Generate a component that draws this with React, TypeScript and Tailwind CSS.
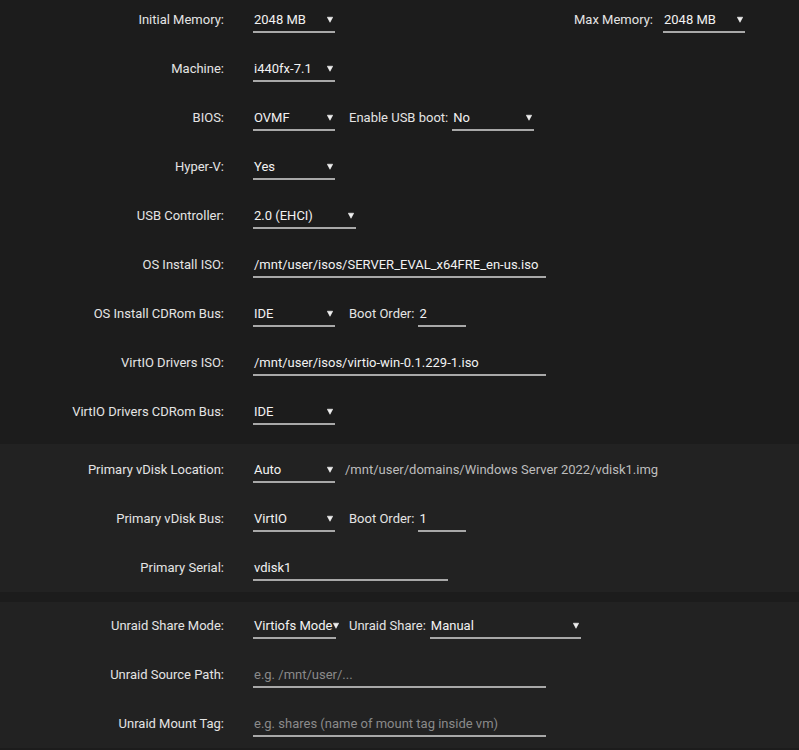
import React from 'react';

function Arrow() {
  return (
    <svg width="6" height="7" viewBox="0 0 6 7" className="shrink-0">
      <path d="M0.3 1.2 L5.7 1.2 L3 6.3 Z" fill="#f0f0f0" stroke="#f0f0f0" strokeWidth="0.6" strokeLinejoin="round" />
    </svg>
  );
}

function Select({ value, w, tight }: { value: string; w: string; tight?: boolean }) {
  return (
    <div className={`flex items-center h-[28px] pt-[3px] border-b-2 border-[#a8a8a8] pl-px pr-[2px] text-[#f2f2f2] ${w} ${tight ? 'justify-start gap-px' : 'justify-between'}`}>
      <span className="whitespace-nowrap">{value}</span>
      <Arrow />
    </div>
  );
}

function TextField({ value, placeholder, w }: { value?: string; placeholder?: string; w: string }) {
  return (
    <div className={`flex items-center h-[28px] pt-[3px] border-b-2 border-[#a8a8a8] pl-px ${w}`}>
      {value
        ? <span className="text-[#f2f2f2] whitespace-nowrap">{value}</span>
        : <span className="text-[#8a8a8a] whitespace-nowrap">{placeholder}</span>}
    </div>
  );
}

function Row({ label, children }: { label: string; children?: React.ReactNode }) {
  return (
    <div className="flex items-center h-[28px]">
      <div className="w-[224px] shrink-0 h-[28px] pt-[3px] pb-[2px] flex items-center justify-end text-[#e4e4e4]">{label}</div>
      <div className="flex items-center pl-[29px] flex-1">{children}</div>
    </div>
  );
}

function Inline({ label }: { label: string }) {
  return (
    <span className="h-[28px] pt-[3px] pb-[2px] flex items-center text-[#e4e4e4] whitespace-nowrap mr-1">{label}</span>
  );
}

export default function App() {
  return (
    <div className="w-[799px] h-[750px] bg-[#1c1c1c] text-[13px] overflow-hidden" style={{ fontFamily: 'Roboto, "Liberation Sans", sans-serif' }}>
      <div className="flex flex-col gap-[21px] pt-[5px] pb-[19px]">
        <Row label="Initial Memory:">
          <Select value="2048 MB" w="w-[82px]" />
          <div className="ml-auto mr-[54px] flex items-center">
            <span className="h-[28px] pt-[3px] pb-[2px] flex items-center text-[#e4e4e4] mr-[10px]">Max Memory:</span>
            <Select value="2048 MB" w="w-[82px]" />
          </div>
        </Row>
        <Row label="Machine:">
          <Select value="i440fx-7.1" w="w-[82px]" />
        </Row>
        <Row label="BIOS:">
          <Select value="OVMF" w="w-[82px]" />
          <span className="ml-[14px]"><Inline label="Enable USB boot:" /></span>
          <Select value="No" w="w-[82px]" />
        </Row>
        <Row label="Hyper-V:">
          <Select value="Yes" w="w-[82px]" />
        </Row>
        <Row label="USB Controller:">
          <Select value="2.0 (EHCI)" w="w-[103px]" />
        </Row>
        <Row label="OS Install ISO:">
          <TextField value="/mnt/user/isos/SERVER_EVAL_x64FRE_en-us.iso" w="w-[293px]" />
        </Row>
        <Row label="OS Install CDRom Bus:">
          <Select value="IDE" w="w-[82px]" />
          <span className="ml-[14px]"><Inline label="Boot Order:" /></span>
          <TextField value="2" w="w-[48px]" />
        </Row>
        <Row label="VirtIO Drivers ISO:">
          <TextField value="/mnt/user/isos/virtio-win-0.1.229-1.iso" w="w-[293px]" />
        </Row>
        <Row label="VirtIO Drivers CDRom Bus:">
          <Select value="IDE" w="w-[82px]" />
        </Row>
      </div>

      <div className="bg-[#222222] flex flex-col gap-[21px] pt-[11px] pb-[11px]">
        <Row label="Primary vDisk Location:">
          <Select value="Auto" w="w-[82px]" />
          <span className="ml-[10px] h-[28px] pt-[3px] pb-[2px] flex items-center text-[#bdbdbd] whitespace-nowrap">/mnt/user/domains/Windows Server 2022/vdisk1.img</span>
        </Row>
        <Row label="Primary vDisk Bus:">
          <Select value="VirtIO" w="w-[82px]" />
          <span className="ml-[14px]"><Inline label="Boot Order:" /></span>
          <TextField value="1" w="w-[48px]" />
        </Row>
        <Row label="Primary Serial:">
          <TextField value="vdisk1" w="w-[195px]" />
        </Row>
      </div>

      <div className="h-[10px]" />

      <div className="bg-[#222222] flex flex-col gap-[21px] pt-[9px] pb-[11px]">
        <Row label="Unraid Share Mode:">
          <Select value="Virtiofs Mode" w="w-[83px]" tight />
          <span className="ml-[13px]"><Inline label="Unraid Share:" /></span>
          <Select value="Manual" w="w-[151px]" />
        </Row>
        <Row label="Unraid Source Path:">
          <TextField placeholder="e.g. /mnt/user/..." w="w-[293px]" />
        </Row>
        <Row label="Unraid Mount Tag:">
          <TextField placeholder="e.g. shares (name of mount tag inside vm)" w="w-[293px]" />
        </Row>
      </div>
    </div>
  );
}
